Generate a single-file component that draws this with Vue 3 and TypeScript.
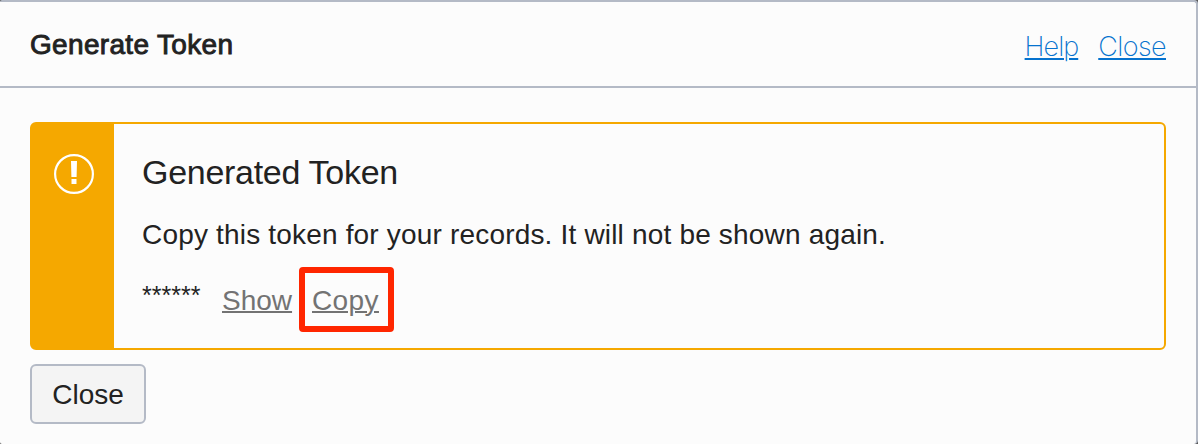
<script setup lang="ts">
import { ref } from 'vue'

const token = 'a1b2c3'
const visible = ref(false)
const open = ref(true)
</script>

<template>
  <section v-if="open" class="dialog">
    <header class="bar">
      <h1 class="title">Generate Token</h1>
      <nav class="links">
        <a class="link help" href="#">Help</a>
        <a class="link" href="#" @click.prevent="open = false">Close</a>
      </nav>
    </header>
    <main class="body">
      <div class="notice">
        <div class="side">
          <svg class="icon" width="40" height="40" viewBox="0 0 40 40">
            <circle cx="20" cy="20" r="18.9" fill="none" stroke="#fff" stroke-width="2.2" />
            <path d="M17 7h6l-.4 16h-5.2zM17.5 25h5v5h-5z" fill="#fff" />
          </svg>
        </div>
        <div class="content">
          <h2 class="heading">Generated Token</h2>
          <p class="text">Copy this token for your records. It will not be shown again.</p>
          <div class="row">
            <span class="mask">{{ visible ? token : '******' }}</span>
            <a class="action show" href="#" @click.prevent="visible = !visible">Show</a>
            <span class="highlight"><a class="action copy" href="#">Copy</a></span>
          </div>
        </div>
      </div>
      <button class="close" type="button" @click="open = false">Close</button>
    </main>
  </section>
</template>

<style>
body {
  background: #555;
}
</style>

<style scoped>
.dialog {
  box-sizing: border-box;
  width: 1198px;
  height: 444px;
  overflow: hidden;
  border-top: 2px solid #b4bac6;
  border-right: 2px solid #b4bac6;
  border-radius: 2px 4px 4px 2px;
  background: #fcfcfc;
  color: #222;
  font-family: "Liberation Sans", Arial, sans-serif;
  font-size: 28px;
}
.bar {
  box-sizing: border-box;
  display: flex;
  justify-content: space-between;
  height: 86px;
  padding: 0 30px;
  border-bottom: 2px solid #b4bac6;
}
.title {
  margin: 27px 0 0;
  font-size: 28px;
  line-height: 32px;
  font-weight: 400;
  letter-spacing: 0.33px;
  -webkit-text-stroke: 0.9px #222;
}
.links {
  display: flex;
  gap: 20px;
  margin-top: 28px;
}
.link {
  font-family: Inter, "Liberation Sans", sans-serif;
  font-size: 27px;
  font-weight: 200;
  line-height: 34px;
  letter-spacing: -0.58px;
  color: #0572ce;
  text-decoration-thickness: 2px;
  text-underline-offset: 2px;
}
.help {
  letter-spacing: -0.96px;
}
.body {
  padding: 34px 30px 0;
}
.notice {
  box-sizing: border-box;
  display: flex;
  height: 228px;
  border: 2px solid #f5a800;
  border-radius: 6px;
}
.side {
  width: 82px;
  background: #f5a800;
}
.icon {
  display: block;
  margin: 30px 0 0 22px;
}
.content {
  padding: 28px 0 0 28px;
}
.heading {
  margin: 0;
  font-size: 34px;
  font-weight: 400;
  line-height: 40px;
  letter-spacing: -0.29px;
}
.text {
  margin: 27px 0 0;
  line-height: 32px;
  letter-spacing: 0.18px;
  white-space: nowrap;
}
.row {
  display: flex;
  margin-top: 16px;
}
.mask {
  width: 80px;
  margin-top: 12px;
  font-size: 25px;
  line-height: 32px;
}
.action {
  color: #737373;
  line-height: 32px;
  text-decoration-thickness: 2px;
  text-underline-offset: 1px;
}
.show {
  width: 70px;
  margin-top: 18px;
}
.highlight {
  box-sizing: border-box;
  width: 95px;
  height: 65px;
  margin-left: 7px;
  padding: 12px 0 0 7px;
  border: 6px solid #ff2600;
  border-radius: 4px;
}
.copy {
  letter-spacing: 0.4px;
}
.close {
  display: block;
  box-sizing: border-box;
  width: 116px;
  height: 60px;
  margin-top: 14px;
  padding: 2px 0 0;
  border: 2px solid #b4bac6;
  border-radius: 6px;
  background: #f4f4f4;
  color: #222;
  font: 28px "Liberation Sans", Arial, sans-serif;
}
</style>
